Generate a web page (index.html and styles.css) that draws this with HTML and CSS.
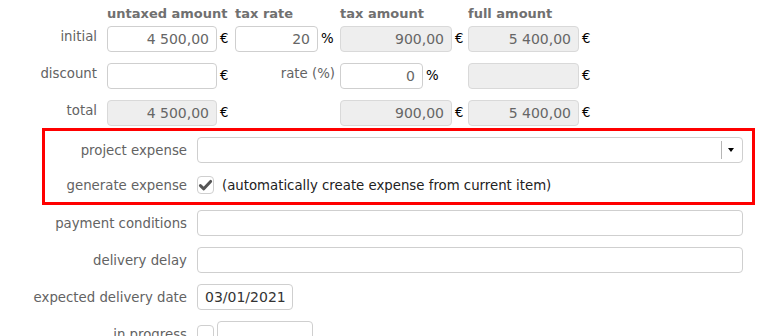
FILE: index.html
```html
<!DOCTYPE html>
<html lang="en">
<head>
<meta charset="utf-8">
<title>Amounts form</title>
<link rel="stylesheet" href="styles.css">
</head>
<body>
<div class="amounts">
  <div class="head col-untaxed">untaxed amount</div>
  <div class="head col-rate">tax rate</div>
  <div class="head col-tax">tax amount</div>
  <div class="head col-full">full amount</div>

  <div class="lbl">initial</div>
  <input class="field num" type="text" value="4 500,00">
  <div class="unit">€</div>
  <input class="field num" type="text" value="20">
  <div class="unit">%</div>
  <input class="field num ro" type="text" value="900,00" readonly>
  <div class="unit">€</div>
  <input class="field num ro" type="text" value="5 400,00" readonly>
  <div class="unit">€</div>

  <div class="lbl">discount</div>
  <input class="field num" type="text" value="">
  <div class="unit">€</div>
  <div class="lbl span2">rate (%)</div>
  <div class="inline">
    <input class="field num short" type="text" value="0">
    <div class="unit">%</div>
  </div>
  <div></div>
  <input class="field num ro" type="text" value="" readonly>
  <div class="unit">€</div>

  <div class="lbl">total</div>
  <input class="field num ro" type="text" value="4 500,00" readonly>
  <div class="unit">€</div>
  <div class="span2"></div>
  <input class="field num ro" type="text" value="900,00" readonly>
  <div class="unit">€</div>
  <input class="field num ro" type="text" value="5 400,00" readonly>
  <div class="unit">€</div>
</div>

<div class="highlight">
  <div class="row row-select">
    <label class="rlbl">project expense</label>
    <div class="select">
      <span class="sep"></span>
      <span class="arrow"></span>
    </div>
  </div>
  <div class="row row-check">
    <label class="rlbl">generate expense</label>
    <div class="check-line">
      <span class="checkbox">
        <svg width="15" height="14" viewBox="0 0 15 14" aria-hidden="true"><path d="M2.4 7.6 L5.8 10.8 L12.6 3.4" fill="none" stroke="#555" stroke-width="3" stroke-linecap="round" stroke-linejoin="round"/></svg>
      </span>
      <span class="note">(automatically create expense from current item)</span>
    </div>
  </div>
</div>

<div class="rows">
  <div class="row">
    <label class="rlbl">payment conditions</label>
    <input class="field wide" type="text" value="">
  </div>
  <div class="row">
    <label class="rlbl">delivery delay</label>
    <input class="field wide" type="text" value="">
  </div>
  <div class="row">
    <label class="rlbl">expected delivery date</label>
    <div><input class="field date" type="text" value="03/01/2021"></div>
  </div>
  <div class="row">
    <label class="rlbl">in progress</label>
    <div class="check-line tight">
      <span class="checkbox"></span>
      <input class="field date" type="text" value="">
    </div>
  </div>
</div>
</body>
</html>
```

FILE: styles.css
```css
* { box-sizing: border-box; }
html, body { margin: 0; padding: 0; background: #fff; }
body {
  font-family: "DejaVu Sans", Verdana, sans-serif;
  font-size: 13.3px;
  color: #636363;
  width: 760px;
  overflow: hidden;
}

.amounts {
  display: grid;
  grid-template-columns: 107px 110px 18px 83px 22px 112px 16px 111px 1fr;
  grid-template-rows: 26px 37px 37px 26px;
  align-items: start;
}
.head {
  align-self: center;
  font-size: 13px;
  font-weight: bold;
  line-height: 15px;
  color: #707070;
  white-space: nowrap;
}
.col-untaxed { grid-column: 2 / 4; }
.col-rate { grid-column: 4 / 6; }
.col-tax { grid-column: 6 / 8; }
.col-full { grid-column: 8 / 10; }

.lbl {
  text-align: right;
  padding-right: 10px;
  line-height: 22px;
  white-space: nowrap;
}
.span2 { grid-column: span 2; padding-right: 5px; }
.unit {
  line-height: 26px;
  padding-left: 3px;
  color: #000;
}
.inline { display: flex; }

.field {
  display: block;
  height: 26px;
  width: 100%;
  margin: 0;
  border: 1px solid #cfcfcf;
  border-radius: 4px;
  background: #fff;
  font-family: "DejaVu Sans", Verdana, sans-serif;
  font-size: 14px;
  color: #666;
  padding: 0 7px;
  outline: none;
}
.num { text-align: right; }
.ro { background: #eeeeee; border-color: #d9d9d9; }
.short { width: 83px; flex: none; }

.highlight {
  margin: 2px 5px 0 42px;
  border: 3px solid #f00;
  padding-right: 9px;
}
.rows { margin: 0 17px 0 45px; }

.row {
  display: grid;
  grid-template-columns: 142px 1fr;
  column-gap: 10px;
  align-items: center;
  padding: 5px 0 6px;
}
.row-select { padding: 6px 0 5px; }
.row-check { padding: 8px 0 8px; }
.rlbl {
  justify-self: end;
  text-align: right;
  line-height: 15px;
  white-space: nowrap;
}

.select {
  height: 26px;
  border: 1px solid #cfcfcf;
  border-radius: 4px;
  background: #fff;
  display: flex;
  align-items: center;
  justify-content: flex-end;
  padding-right: 8px;
}
.sep {
  width: 1px;
  height: 18px;
  background: #b5b5b5;
  margin-right: 6px;
}
.arrow {
  width: 0;
  height: 0;
  border-left: 3.5px solid transparent;
  border-right: 3.5px solid transparent;
  border-top: 4px solid #000;
}

.check-line { display: flex; align-items: center; gap: 8px; }
.check-line.tight { gap: 3px; }
.checkbox {
  width: 17px;
  height: 18px;
  flex: none;
  border: 1px solid #cfcfcf;
  border-radius: 4px;
  background: #fff;
  display: flex;
  align-items: center;
  justify-content: center;
}
.checkbox svg { display: block; }
.note { color: #222; line-height: 15px; white-space: nowrap; }

.wide { width: 100%; }
.date { width: 96px; color: #333; }
```
